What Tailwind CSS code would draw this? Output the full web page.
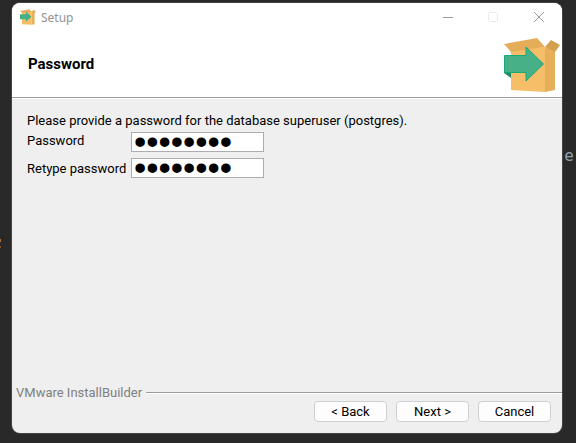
<!DOCTYPE html>
<html lang="en">
<head>
    <meta charset="UTF-8">
    <meta name="viewport" content="width=device-width, initial-scale=1.0">
    <title>Setup</title>
    <script src="https://cdn.jsdelivr.net/npm/@tailwindcss/browser@4"></script>
</head>
<body class="relative flex h-screen overflow-hidden bg-[#292929] pt-[3px] pr-[14px] pb-[10px] pl-[12px] font-['Roboto',sans-serif] text-[13px] leading-4 text-black">
    <!-- Editor text behind the window -->
    <span class="absolute right-0 top-[148px] flex w-[14px] justify-center overflow-hidden font-['DejaVu_Sans_Mono',monospace] text-base leading-4 text-[#8fa3ad]" aria-hidden="true">ner</span>
    <span class="absolute left-0 top-[239px] h-[3px] w-px bg-[#a9713b]"></span>
    <span class="absolute left-0 top-[246px] h-[2px] w-px bg-[#7d5127]"></span>

    <!-- Setup Window -->
    <main class="relative flex flex-1 flex-col overflow-hidden rounded-lg bg-[#efefef] ring-1 ring-[#444444]">
        <header class="border-b border-[#9b9b9b] bg-white">
            <!-- Title Bar -->
            <div class="flex h-7 items-center pl-2">
                <svg class="h-4 w-4" viewBox="0 0 56 54" aria-hidden="true">
                    <path fill="#f5be67" d="M7 12 41 8V54L7 52Z"/>
                    <path fill="#e8af5a" d="M41 8 51 12V52L41 54ZM0 6 32 0 41 9 8 14ZM41 9 47 2 56 8 51 14Z"/>
                    <path fill="#45b086" d="M0 17H21V8L40 26 21 44V35H0Z"/>
                </svg>
                <span class="ml-[5px] flex-1 pt-px font-['Noto_Sans',sans-serif] text-xs text-[#929292]">Setup</span>
                <button type="button" aria-label="Minimize" class="flex h-7 w-[45px] items-center justify-center text-[#999999]">
                    <svg class="h-3 w-3" viewBox="0 0 12 12" fill="none" stroke="currentColor"><path d="M1 6.500H11"/></svg>
                </button>
                <button type="button" aria-label="Maximize" disabled class="flex h-7 w-[45px] items-center justify-center text-[#ebebeb]">
                    <svg class="h-3 w-3" viewBox="0 0 12 12" fill="none" stroke="currentColor"><rect x="1.500" y="1.500" width="9" height="9" rx="1"/></svg>
                </button>
                <button type="button" aria-label="Close" class="flex h-7 w-[47px] items-center justify-center text-[#999999]">
                    <svg class="h-3 w-3" viewBox="0 0 12 12" fill="none" stroke="currentColor"><path d="M1 1 11 11M11 1 1 11"/></svg>
                </button>
            </div>

            <!-- Page Heading -->
            <div class="flex h-[66px] items-start justify-between pl-4 pr-[2px]">
                <h1 class="mt-[25px] text-[15px] leading-4 font-bold">Password</h1>
                <svg class="mt-[7px] h-[54px] w-[56px]" viewBox="0 0 56 54" aria-hidden="true">
                    <path fill="#f5be67" d="M7 12 41 9V54L7 52Z"/>
                    <path fill="#e8af5a" d="M41 9 51 13V52L41 54Z"/>
                    <path fill="#e5ad59" d="M0 6 33 0 41 9 7 14Z"/>
                    <path fill="#d5a04d" d="M41 9 47 2 56 7 51 14Z"/>
                    <path fill="#258863" d="M0 34 7 35V40L0 35Z"/>
                    <path fill="#48b087" stroke="#13ab7b" d="M.5 17.500H22V9L39.500 26 22 43V34.500H.5Z"/>
                </svg>
            </div>
        </header>

        <!-- Password Form -->
        <form id="password-form" class="flex-1 border-t border-white px-[15px] pt-[14px]" onsubmit="return false">
            <p>Please provide a password for the database superuser (postgres).</p>
            <div class="mt-[3px] grid grid-cols-[104px_133px] gap-y-[6px]">
                <label for="password" class="pt-px">Password</label>
                <input id="password" type="password" value="postgres" class="h-5 border border-[#adadb1] bg-white px-[2px] font-['Liberation_Sans',sans-serif] text-[35px] leading-4 outline-none">
                <label for="retype" class="pt-[3px] whitespace-nowrap">Retype password</label>
                <input id="retype" type="password" value="postgres" class="h-5 border border-[#adadb1] bg-white px-[2px] font-['Liberation_Sans',sans-serif] text-[35px] leading-4 outline-none">
            </div>
        </form>

        <!-- Footer -->
        <footer class="pb-[11px]">
            <div class="flex items-center gap-1 pl-1 text-[#7f7f7f]">
                <span>VMware InstallBuilder</span>
                <span class="h-[2px] flex-1 border-t border-b border-t-[#9b9b9b] border-b-white"></span>
            </div>
            <div class="flex justify-end gap-[9px] pr-[11px]">
                <button type="button" class="h-[21px] w-[73px] rounded border border-[#cfcfcf] bg-[#fdfdfd]">&lt; Back</button>
                <button type="submit" form="password-form" class="h-[21px] w-[73px] rounded border border-[#cfcfcf] bg-[#fdfdfd]">Next &gt;</button>
                <button type="button" class="h-[21px] w-[73px] rounded border border-[#cfcfcf] bg-[#fdfdfd]">Cancel</button>
            </div>
        </footer>
    </main>
</body>
</html>
